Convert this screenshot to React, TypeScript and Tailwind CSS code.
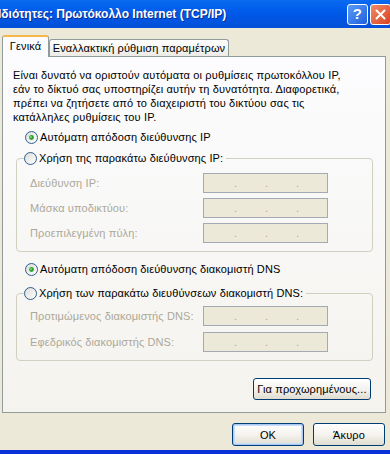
import React from 'react';

const font = "font-['Liberation_Sans',Arial,sans-serif]";

const Radio = ({ checked }: { checked?: boolean }) => (
  <svg width="13" height="13" viewBox="0 0 13 13" className="shrink-0">
    <defs>
      <linearGradient id={checked ? 'rg1' : 'rg0'} x1="0" y1="0" x2="1" y2="1">
        <stop offset="0" stopColor="#DCDBD4" />
        <stop offset="1" stopColor="#FFFFFF" />
      </linearGradient>
    </defs>
    <circle cx="6.5" cy="6.5" r="6" fill={`url(#${checked ? 'rg1' : 'rg0'})`} stroke="#2F5F92" strokeWidth="1" />
    {checked && <circle cx="6.5" cy="6.5" r="2.4" fill="#2BA12B" />}
    {checked && <circle cx="6" cy="6" r="1" fill="#7FD87F" />}
  </svg>
);

const IpBox = () => (
  <div className="flex h-[20px] w-[125px] items-center border border-[#A3AAB4] bg-[#ECE9D8] text-[11px] leading-none text-[#ACA899]">
    <span className="w-[30px]" />
    <span className="w-[2px] text-center">.</span>
    <span className="w-[29px]" />
    <span className="w-[2px] text-center">.</span>
    <span className="w-[29px]" />
    <span className="w-[2px] text-center">.</span>
  </div>
);

const FieldRow = ({ label }: { label: string }) => (
  <div className="flex items-center">
    <span className="w-[173px] whitespace-nowrap text-[#ACA899]">{label}</span>
    <IpBox />
  </div>
);

const XpButton = ({ children, def, className }: { children: React.ReactNode; def?: boolean; className?: string }) => (
  <button
    className={`flex items-center justify-center rounded-[3px] border border-[#003C74] bg-linear-to-b from-[#FFFFFF] via-[#F4F3EE] to-[#E0DCD0] text-[11px] text-black ${
      def ? 'shadow-[inset_0_0_0_1px_#A9C8F5,inset_0_0_0_2px_#C9DDF8]' : ''
    } ${className ?? ''}`}
  >
    {children}
  </button>
);

const App = () => {
  return (
    <div className={`flex h-[454px] w-[390px] flex-col overflow-hidden bg-[#ECE9D8] text-[11px] leading-[14px] tracking-[0.12px] text-black ${font}`}>
      {/* title bar */}
      <div className="flex h-[28px] items-center justify-between bg-linear-to-b from-[#0A6AF0] via-[#0058E8] to-[#0450D8]">
        <span className="ml-[-2px] whitespace-nowrap text-[12px] font-bold tracking-normal text-white [text-shadow:1px_1px_#0A2A90]">
          Ιδιότητες: Πρωτόκολλο Internet (TCP/IP)
        </span>
        <div className="mr-[-1px] flex gap-[2px]">
          <div className="flex h-[21px] w-[21px] items-center justify-center rounded-[3px] border border-white bg-linear-to-br from-[#5A9CF8] to-[#1F5FDC] text-[15px] font-bold text-white">
            ?
          </div>
          <div className="flex h-[21px] w-[21px] items-center justify-center rounded-[3px] border border-white bg-linear-to-br from-[#F08A68] to-[#D8401C]">
            <svg width="11" height="11" viewBox="0 0 11 11">
              <path d="M1.5 1.5 L9.5 9.5 M9.5 1.5 L1.5 9.5" stroke="#fff" strokeWidth="2" strokeLinecap="round" />
            </svg>
          </div>
        </div>
      </div>

      <div className="mt-[7px] pl-[2px]">
        {/* tabs */}
        <div className="flex h-[21px] items-end">
          <div className="relative z-10 -mb-px flex h-[22px] w-[47px] items-center justify-center rounded-t-[3px] border-x border-t-2 border-x-[#919B9C] border-t-[#F5B64A] bg-[#FCFCFE] pb-[2px]">
            Γενικά
          </div>
          <div className="flex h-[17px] w-[180px] items-center justify-center whitespace-nowrap rounded-t-[3px] border-x border-t border-[#919B9C] bg-linear-to-b from-white to-[#ECEBE6]">
            Εναλλακτική ρύθμιση παραμέτρων
          </div>
        </div>

        {/* panel */}
        <div className="flex h-[357px] w-[384px] flex-col border border-[#919B9C] bg-linear-to-b from-[#FCFCFE] to-[#F4F3EE] pl-[10px] pr-[12px] pt-[11px]">
          <p className="whitespace-nowrap tracking-[0.15px]">
            Είναι δυνατό να οριστούν αυτόματα οι ρυθμίσεις πρωτοκόλλου IP,
            <br />
            εάν το δίκτυό σας υποστηρίζει αυτήν τη δυνατότητα. Διαφορετικά,
            <br />
            πρέπει να ζητήσετε από το διαχειριστή του δικτύου σας τις
            <br />
            κατάλληλες ρυθμίσεις του IP.
          </p>

          <div className="mt-[5px] flex h-[16px] items-center gap-[2px] pl-[12px]">
            <Radio checked />
            <span>Αυτόματη απόδοση διεύθυνσης IP</span>
          </div>

          <fieldset className="ml-[3px] mt-[5px] rounded-[4px] border border-[#D0D0BF] pb-[8px] pl-[7px]">
            <legend className="flex h-[16px] items-center gap-[2px] pr-[3px]">
              <Radio />
              <span>Χρήση της παρακάτω διεύθυνσης IP:</span>
            </legend>
            <div className="mt-[7px] flex flex-col gap-[5px] pl-[6px]">
              <FieldRow label="Διεύθυνση IP:" />
              <FieldRow label="Μάσκα υποδικτύου:" />
              <FieldRow label="Προεπιλεγμένη πύλη:" />
            </div>
          </fieldset>

          <div className="mt-[9px] flex h-[16px] items-center gap-[2px] pl-[12px]">
            <Radio checked />
            <span>Αυτόματη απόδοση διεύθυνσης διακομιστή DNS</span>
          </div>

          <fieldset className="ml-[3px] mt-[8px] rounded-[4px] border border-[#D0D0BF] pb-[8px] pl-[7px]">
            <legend className="flex h-[16px] items-center gap-[2px] pr-[3px]">
              <Radio />
              <span>Χρήση των παρακάτω διευθύνσεων διακομιστή DNS:</span>
            </legend>
            <div className="mt-[5px] flex flex-col gap-[6px] pl-[6px]">
              <FieldRow label="Προτιμώμενος διακομιστής DNS:" />
              <FieldRow label="Εφεδρικός διακομιστής DNS:" />
            </div>
          </fieldset>

          <div className="mt-[17px] flex justify-end pr-[2px]">
            <XpButton className="h-[22px] w-[118px]">Για προχωρημένους...</XpButton>
          </div>
        </div>
      </div>

      {/* dialog buttons */}
      <div className="mt-[10px] flex justify-end gap-[9px] pr-[5px]">
        <XpButton def className="h-[23px] w-[72px]">
          OK
        </XpButton>
        <XpButton className="h-[23px] w-[72px]">Άκυρο</XpButton>
      </div>

      <div className="mt-auto h-[4px] bg-[#0831D9]" />
    </div>
  );
};

export default App;
